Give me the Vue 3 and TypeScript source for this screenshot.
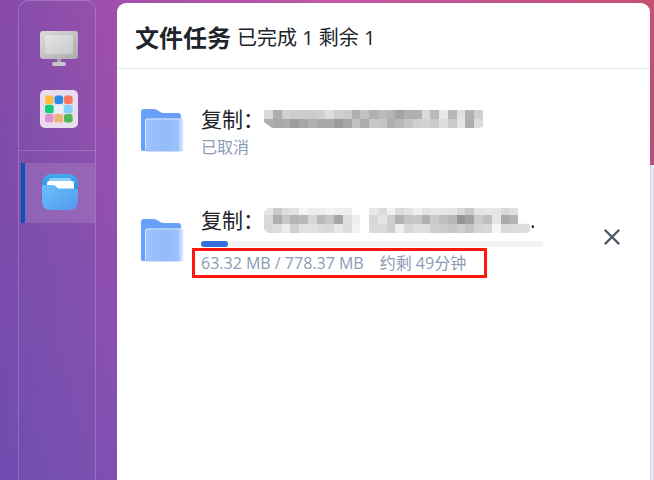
<script setup lang="ts">
interface Task {
  id: number
  cells: string[]
  rowHeights: number[]
  clip: string
  running: boolean
}

// Each row is a list of grey levels in hex; "ff" leaves the block empty.
const tasks: Task[] = [
  {
    id: 1,
    running: false,
    rowHeights: [9, 9],
    clip: 'M0 0H219V17L214 18H8L0 12Z',
    cells: [
      'da ae d0 cd cd cc d0 dd ce cb b0 c2 af ba b4 a4 b0 b0 da b9 e8 b7 e2 b2 d0',
      'b0 a9 ac 9b a6 b0 a8 a8 9b a6 c2 ac c8 c5 b0 b7 c4 d0 d3 cb dd cb e6 ad dc',
    ],
  },
  {
    id: 2,
    running: true,
    rowHeights: [7, 9, 9],
    clip: 'M4 0H254V9L266 17V23L263 25H4L0 21V4Z',
    cells: [
      'e6 cb dd e1 f5 ee ee f2 ee ee ff ff e8 db f0 dc e3 ef e4 e7 e6 e4 d8 ca e3 e7 e4 d9 e0 ff ff',
      'd9 ae c8 b5 ba d7 b9 c5 a6 de ed ff d8 e5 cf b2 c4 c7 b0 cb be b8 94 a2 cb bf e5 aa b3 fc ff',
      'd8 dc ec d0 e1 e1 dc d9 e8 dd f2 ff da d9 ce ef d8 df df ce cc c6 ce c4 d5 d8 f7 db db dc de',
    ],
  },
]

const blockWidth = 8.76

function blocks(task: Task) {
  let top = 0
  return task.cells.flatMap((row, r) => {
    const y = top
    const height = task.rowHeights[r]
    top += height
    return row.split(' ').map((tone, c) => ({
      key: `${r}-${c}`,
      x: Math.round(c * blockWidth),
      y,
      width: Math.round((c + 1) * blockWidth) - Math.round(c * blockWidth),
      height,
      fill: tone === 'ff' ? 'none' : `#${tone}${tone}${tone}`,
    }))
  })
}

const appTiles = [
  '#ffba45', '#2b8ce4', '#fa775e',
  '#10cf74', '#e9effa', '#82d0fb',
  '#e293cf', '#e9b675', '#50b759',
]

const progress = 8
</script>

<template>
  <div class="desktop">
    <nav class="dock" aria-label="Dock">
      <div class="shortcuts">
        <button class="dock-item" type="button" aria-label="Computer">
          <svg width="38" height="36" viewBox="0 0 38 36">
            <defs>
              <linearGradient id="screen" x1="0" y1="0" x2="1" y2="1">
                <stop offset="0" stop-color="#dcdcde" />
                <stop offset="1" stop-color="#aaaaac" />
              </linearGradient>
              <linearGradient id="glass" x1="0" y1="0" x2="1" y2="1">
                <stop offset="0" stop-color="#e4e4e5" />
                <stop offset="1" stop-color="#c9c9cb" />
              </linearGradient>
            </defs>
            <path d="M17 27h4v6h-4z" fill="#aaa5ae" />
            <rect x="12" y="31" width="14" height="4" rx="2" fill="#c8c4cb" />
            <rect width="38" height="28" rx="3" fill="url(#screen)" />
            <rect x="5" y="4" width="28" height="19" rx="1" fill="url(#glass)" />
          </svg>
        </button>
        <button class="dock-item" type="button" aria-label="Apps">
          <svg width="38" height="38" viewBox="0 0 38 38">
            <rect width="38" height="38" rx="5" fill="#e9dcee" />
            <rect
              v-for="(color, i) in appTiles"
              :key="i"
              :x="5 + (i % 3) * 9.5"
              :y="5.5 + Math.floor(i / 3) * 9.2"
              width="8.6"
              height="8.6"
              rx="2.5"
              :fill="color"
            />
          </svg>
        </button>
      </div>
      <button class="dock-item active" type="button" aria-label="Files">
        <svg width="36" height="36" viewBox="0 0 36 36">
          <defs>
            <linearGradient id="tile" x1="0" y1="0" x2="0" y2="1">
              <stop offset="0" stop-color="#43aaf0" />
              <stop offset="1" stop-color="#1675d2" />
            </linearGradient>
            <linearGradient id="front" x1="0" y1="0" x2="1" y2="1">
              <stop offset="0" stop-color="#6bc0fc" />
              <stop offset="1" stop-color="#5398ee" />
            </linearGradient>
          </defs>
          <rect width="36" height="30" rx="9" fill="url(#tile)" />
          <rect x="7" y="4" width="22" height="9" rx="2" fill="#8dcbf8" />
          <rect x="5" y="7" width="27" height="12" rx="2" fill="#fff" />
          <path d="M0 13q0-2 2-2h9q2 0 3.500 2t3.500 1.500h15.500q2.500 0 2.500 2v10.500q0 9-9 9H9q-9 0-9-9z" fill="url(#front)" />
        </svg>
      </button>
    </nav>

    <main class="panel">
      <header class="panel-header">
        <h1>文件任务</h1>
        <span class="summary">已完成 1 剩余 1</span>
      </header>
      <ul class="tasks">
        <li v-for="task in tasks" :key="task.id" class="task">
          <svg class="folder" width="44" height="44" viewBox="0 0 44 44">
            <defs>
              <linearGradient :id="`pane-${task.id}`" x1="0" y1="0" x2="1" y2="0">
                <stop offset="0" stop-color="#9fc3fc" />
                <stop offset="0.5" stop-color="#94bbfb" />
                <stop offset="0.86" stop-color="#9dc1fc" />
                <stop offset="1" stop-color="#e7f0fe" />
              </linearGradient>
            </defs>
            <path d="M0 3q0-3 3-3h10q2 0 4 1.500t5 2.500h15q3 0 3 3v35H2q-2 0-2-2z" fill="#68a0f7" />
            <rect x="4" y="9.500" width="38.500" height="33" rx="2" :fill="`url(#pane-${task.id})`" />
            <path d="M4.500 41V12q0-2 2-2H41" fill="none" stroke="#d5e5fe" />
          </svg>
          <div class="details">
            <div class="name">
              <span>复制：</span>
              <svg
                class="mask"
                :width="task.running ? 266 : 219"
                :height="task.running ? 25 : 18"
                shape-rendering="crispEdges"
              >
                <clipPath :id="`clip-${task.id}`"><path :d="task.clip" /></clipPath>
                <g :clip-path="`url(#clip-${task.id})`">
                  <rect
                    v-for="b in blocks(task)"
                    :key="b.key"
                    :x="b.x"
                    :y="b.y"
                    :width="b.width"
                    :height="b.height"
                    :fill="b.fill"
                  />
                </g>
              </svg>
              <span v-if="task.running">.</span>
            </div>
            <template v-if="task.running">
              <div class="track" role="progressbar" aria-label="复制" :aria-valuenow="progress">
                <div class="bar" :style="{ width: progress + '%' }"></div>
              </div>
              <div class="status marked">
                <span>63.32 MB / 778.37 MB</span>
                <span>约剩 49分钟</span>
              </div>
            </template>
            <div v-else class="status">已取消</div>
          </div>
          <div class="action">
            <button v-if="task.running" class="close" type="button" aria-label="Cancel">
              <svg width="16" height="16" viewBox="0 0 16 16">
                <path d="M1.500 1.500l13 13M14.500 1.500l-13 13" stroke="#4a5868" stroke-width="2.400" stroke-linecap="round" />
              </svg>
            </button>
          </div>
        </li>
      </ul>
    </main>
    <div class="back-window"></div>
  </div>
</template>

<style>
body {
  margin: 0;
}
</style>

<style scoped>
.desktop {
  display: flex;
  box-sizing: border-box;
  min-height: 100vh;
  font-family: "Open Sans", "Noto Sans CJK SC", sans-serif;
  color: #20242a;
  background:
    linear-gradient(to bottom, rgba(70, 80, 190, 0) 0%, rgba(70, 80, 190, 0.36) 100%),
    linear-gradient(to right, #864aa8 0, #a14fac 117px, #c058a6 50%, #c65072 100%);
}

button {
  padding: 0;
  border: 0;
  background: none;
  cursor: pointer;
}

svg {
  display: block;
}

.dock {
  flex: none;
  width: 76px;
  margin: 0 21px 0 18px;
  border: 1px solid rgba(255, 255, 255, 0.2);
  border-bottom: 0;
  border-radius: 10px 10px 0 0;
  background: rgba(110, 90, 180, 0.14);
}

.shortcuts {
  padding: 18px 0 11px;
  margin-bottom: 12px;
  border-bottom: 1px solid rgba(255, 255, 255, 0.2);
}

.dock-item {
  display: flex;
  align-items: center;
  justify-content: center;
  box-sizing: border-box;
  width: 100%;
  height: 60px;
  padding-left: 4px;
}

.dock-item.active {
  width: 74px;
  margin-left: 2px;
  padding: 0 0 2px;
  border-left: 4px solid #0b53b7;
  background: rgba(255, 255, 255, 0.12);
}

.panel {
  flex: 1;
  min-width: 0;
  margin-top: 3px;
  border-radius: 9px 9px 0 0;
  background: #fff;
}

.panel-header {
  display: flex;
  align-items: center;
  gap: 6px;
  height: 61px;
  padding: 4px 18px 0;
  border-bottom: 1px solid #dfe7f1;
}

h1 {
  margin: 0;
  font-size: 24px;
  line-height: 32px;
  font-weight: 700;
}

.summary {
  font-size: 20px;
  line-height: 32px;
}

.tasks {
  display: flex;
  flex-direction: column;
  gap: 45px;
  margin: 0;
  padding: 34px 24px;
  list-style: none;
}

.task {
  display: flex;
  align-items: center;
  gap: 16px;
}

.folder {
  flex: none;
}

.details {
  flex: 1;
  min-width: 0;
}

.name {
  display: flex;
  align-items: center;
  height: 32px;
  font-size: 21px;
  line-height: 32px;
  white-space: nowrap;
}

.mask {
  flex: none;
}

.status {
  display: flex;
  gap: 16px;
  font-size: 16px;
  line-height: 24px;
  color: #8a9bb5;
  white-space: nowrap;
}

.track {
  height: 6px;
  margin: 5px 0 1px;
  border-radius: 3px;
  background: #f2f3f5;
}

.bar {
  height: 6px;
  border-radius: 3px;
  background: #3372db;
}

.marked {
  width: max-content;
  margin-left: -9px;
  padding: 0 18px 0 6px;
  border: 3px solid #ff160c;
}

.action {
  flex: none;
  width: 67px;
  display: flex;
  justify-content: flex-end;
}

.close {
  margin: 0 6px 8px 0;
}

.back-window {
  flex: none;
  width: 3px;
  margin-top: 165px;
  border-left: 1px solid #d5d7e0;
  background: #e6e7ee;
}
</style>
